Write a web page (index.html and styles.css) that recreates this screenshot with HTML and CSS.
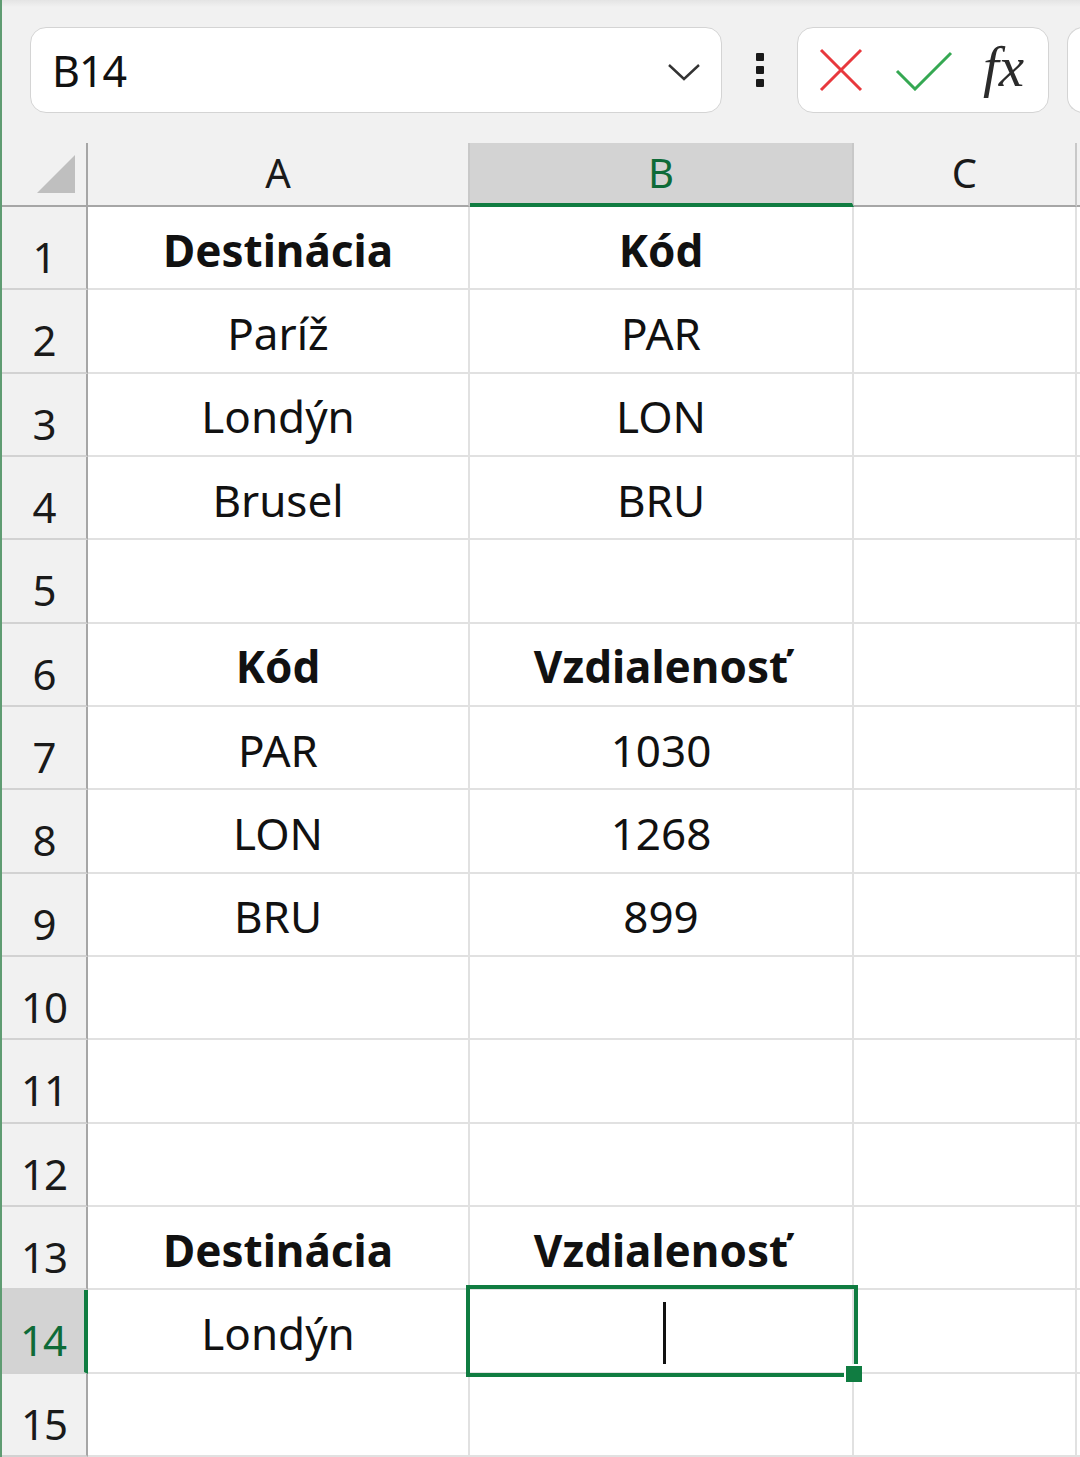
FILE: index.html
```html
<!DOCTYPE html>
<html lang="sk">
<head>
    <meta charset="UTF-8">
    <title>Zošit1 - Excel</title>
    <link rel="stylesheet" href="styles.css">
</head>
<body>
<div class="app">
    <div class="toolbar">
        <div class="namebox">
            <span class="ref">B14</span>
            <svg class="chevron" width="34" height="20" viewBox="0 0 34 20"><path d="M2 3 L17 17 L32 3" fill="none" stroke="#333" stroke-width="2.4"/></svg>
        </div>
        <div class="more"><i></i><i></i><i></i></div>
        <div class="fbuttons">
            <svg width="44" height="44" viewBox="0 0 44 44"><path d="M2 2 L42 42 M42 2 L2 42" stroke="#e8383d" stroke-width="3"/></svg>
            <svg width="58" height="42" viewBox="0 0 58 42"><path d="M2 22 L20 40 L56 4" fill="none" stroke="#35a852" stroke-width="3"/></svg>
            <span class="fx">fx</span>
        </div>
        <div class="fbar"></div>
    </div>

    <div class="sheet">
        <div class="corner"><span class="tri"></span></div>
        <div class="colhead">A</div>
        <div class="colhead active">B</div>
        <div class="colhead">C</div>
        <div class="colhead rest"></div>

        <div class="rowhead">1</div><div class="cell bold">Destinácia</div><div class="cell bold">Kód</div><div class="cell"></div><div class="cell rest"></div>
        <div class="rowhead">2</div><div class="cell">Paríž</div><div class="cell">PAR</div><div class="cell"></div><div class="cell rest"></div>
        <div class="rowhead">3</div><div class="cell">Londýn</div><div class="cell">LON</div><div class="cell"></div><div class="cell rest"></div>
        <div class="rowhead">4</div><div class="cell">Brusel</div><div class="cell">BRU</div><div class="cell"></div><div class="cell rest"></div>
        <div class="rowhead">5</div><div class="cell"></div><div class="cell"></div><div class="cell"></div><div class="cell rest"></div>
        <div class="rowhead">6</div><div class="cell bold">Kód</div><div class="cell bold">Vzdialenosť</div><div class="cell"></div><div class="cell rest"></div>
        <div class="rowhead">7</div><div class="cell">PAR</div><div class="cell">1030</div><div class="cell"></div><div class="cell rest"></div>
        <div class="rowhead">8</div><div class="cell">LON</div><div class="cell">1268</div><div class="cell"></div><div class="cell rest"></div>
        <div class="rowhead">9</div><div class="cell">BRU</div><div class="cell">899</div><div class="cell"></div><div class="cell rest"></div>
        <div class="rowhead">10</div><div class="cell"></div><div class="cell"></div><div class="cell"></div><div class="cell rest"></div>
        <div class="rowhead">11</div><div class="cell"></div><div class="cell"></div><div class="cell"></div><div class="cell rest"></div>
        <div class="rowhead">12</div><div class="cell"></div><div class="cell"></div><div class="cell"></div><div class="cell rest"></div>
        <div class="rowhead">13</div><div class="cell bold">Destinácia</div><div class="cell bold">Vzdialenosť</div><div class="cell"></div><div class="cell rest"></div>
        <div class="rowhead active">14</div><div class="cell">Londýn</div><div class="cell selected"><span class="caret"></span><span class="handle"></span></div><div class="cell"></div><div class="cell rest"></div>
        <div class="rowhead">15</div><div class="cell"></div><div class="cell"></div><div class="cell"></div><div class="cell rest"></div>
    </div>
</div>
</body>
</html>
```

FILE: styles.css
```css
html, body {
    margin: 0;
    padding: 0;
}
body {
    font-family: "Noto Sans", "Open Sans", sans-serif;
    color: #1a1a1a;
    background-color: #fff;
    width: 1080px;
    height: 1457px;
    overflow: hidden;
}
.app {
    border-left: 2px solid #5f9c72;
    height: 1457px;
    box-sizing: border-box;
}

/* formula bar */
.toolbar {
    height: 143px;
    box-sizing: border-box;
    background: linear-gradient(#e4e4e4 0, #f1f1f1 7px, #f1f1f1 100%);
    padding: 27px 0 0 28px;
    display: flex;
    align-items: flex-start;
    overflow: hidden;
}
.toolbar > div {
    flex-shrink: 0;
}
.namebox {
    width: 692px;
    height: 86px;
    box-sizing: border-box;
    background-color: #fff;
    border: 1.5px solid #d4d4d4;
    border-radius: 16px;
    display: flex;
    align-items: center;
    justify-content: space-between;
    padding: 0 20px 0 21px;
}
.namebox .ref {
    font-size: 43px;
    color: #111;
    letter-spacing: -1px;
}
.chevron {
    margin-top: 4px;
}
.more {
    width: 75px;
    height: 86px;
    display: flex;
    flex-direction: column;
    align-items: center;
    justify-content: center;
    gap: 5px;
}
.more i {
    width: 8px;
    height: 8px;
    background-color: #1a1a1a;
    border-radius: 1px;
}
.fbuttons {
    width: 252px;
    height: 86px;
    box-sizing: border-box;
    background-color: #fff;
    border: 1.5px solid #d4d4d4;
    border-radius: 16px;
    display: flex;
    align-items: center;
    padding: 0 0 0 21px;
    gap: 34px;
}
.fbuttons svg:nth-child(2) {
    margin-left: -2px;
}
.fx {
    font-family: "Liberation Serif", serif;
    font-style: italic;
    font-size: 57px;
    color: #2b2b2b;
    margin-left: -4px;
    margin-top: -8px;
}
.fbar {
    margin-left: 18px;
    width: 60px;
    height: 86px;
    box-sizing: border-box;
    background-color: #fff;
    border: 1.5px solid #d4d4d4;
    border-radius: 16px 0 0 16px;
    border-right: none;
}

/* grid */
.sheet {
    display: grid;
    grid-template-columns: 86px 382px 384px 223px 1fr;
    grid-template-rows: 64px repeat(15, 83.33px);
}
.corner {
    background-color: #f1f1f1;
    border-right: 2px solid #a6a6a6;
    border-bottom: 2px solid #a6a6a6;
    position: relative;
}
.tri {
    position: absolute;
    right: 11px;
    bottom: 12px;
    width: 0;
    height: 0;
    border-left: 38px solid transparent;
    border-bottom: 38px solid #bfbfbf;
}
.colhead {
    background-color: #f1f1f1;
    border-right: 2px solid #c8c8c8;
    border-bottom: 2px solid #a6a6a6;
    display: flex;
    align-items: center;
    justify-content: center;
    font-size: 40px;
    color: #1a1a1a;
    padding-bottom: 4px;
    box-sizing: border-box;
}
.colhead.active {
    background-color: #d3d3d3;
    color: #0e6b38;
    border-bottom: 4px solid #107c41;
    padding-bottom: 2px;
}
.colhead.rest {
    border-right: none;
}
.rowhead {
    background-color: #f1f1f1;
    border-right: 2px solid #a6a6a6;
    border-bottom: 2px solid #d2d2d2;
    display: flex;
    align-items: center;
    justify-content: center;
    font-size: 42px;
    color: #1a1a1a;
    padding-top: 18px;
    box-sizing: border-box;
    letter-spacing: -1px;
}
.rowhead.active {
    background-color: #d3d3d3;
    color: #0e6b38;
    border-right: 4px solid #107c41;
}
.cell {
    background-color: #fff;
    border-right: 2px solid #e1e1e1;
    border-bottom: 2px solid #e1e1e1;
    display: flex;
    align-items: center;
    justify-content: center;
    font-size: 44px;
    color: #111;
    position: relative;
    box-sizing: border-box;
    padding-top: 4px;
}
.cell.rest {
    border-right: none;
}
.cell.bold {
    font-weight: 700;
}
.cell.selected {
    z-index: 2;
}
.cell.selected::after {
    content: "";
    position: absolute;
    left: -4px;
    top: -5px;
    right: -6px;
    bottom: -5px;
    border: 4px solid #107c41;
}
.caret {
    width: 3px;
    height: 62px;
    background-color: #111;
    margin-left: 6px;
}
.handle {
    position: absolute;
    right: -10px;
    bottom: -10px;
    width: 16px;
    height: 16px;
    background-color: #107c41;
    border-left: 2px solid #fff;
    border-top: 2px solid #fff;
    z-index: 3;
}
```
